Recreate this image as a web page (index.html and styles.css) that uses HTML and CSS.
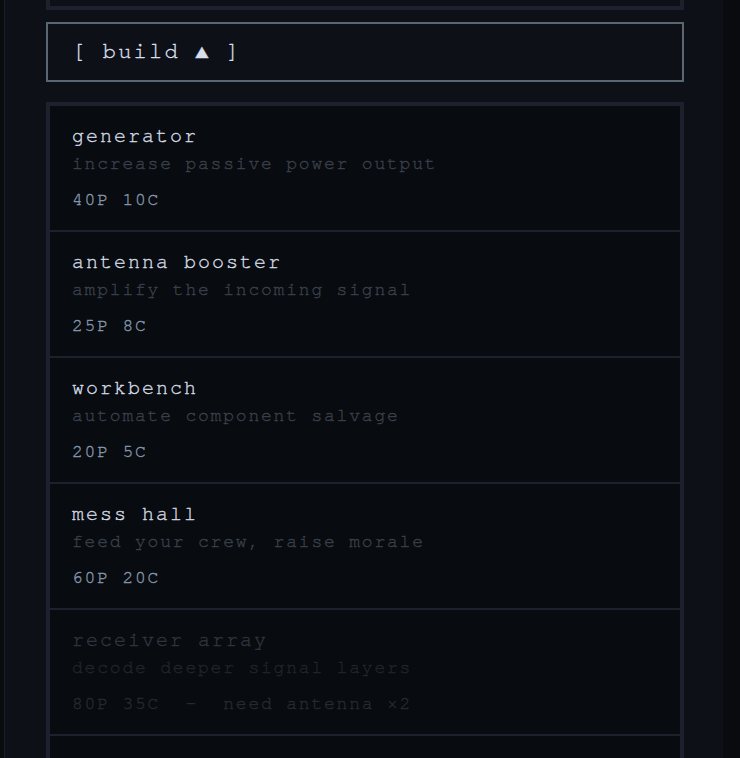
FILE: index.html
```html
<!DOCTYPE html>
<html>

<head>
  <meta charset="UTF-8">
  <title>outpost</title>
  <meta name="viewport" content="width=device-width,initial-scale=1.0">
  <link rel="stylesheet" href="styles.css">
</head>

<body>
  <div class="panel">

    <div class="log_box"></div>

    <div class="build_toggle">[ build ▲ ]</div>

    <div class="build_list">

      <div class="build_item">
        <div class="item_name">generator</div>
        <div class="item_desc">increase passive power output</div>
        <div class="item_cost">40P 10C</div>
      </div>

      <div class="build_item">
        <div class="item_name">antenna booster</div>
        <div class="item_desc">amplify the incoming signal</div>
        <div class="item_cost">25P 8C</div>
      </div>

      <div class="build_item">
        <div class="item_name">workbench</div>
        <div class="item_desc">automate component salvage</div>
        <div class="item_cost">20P 5C</div>
      </div>

      <div class="build_item">
        <div class="item_name">mess hall</div>
        <div class="item_desc">feed your crew, raise morale</div>
        <div class="item_cost">60P 20C</div>
      </div>

      <div class="build_item locked">
        <div class="item_name">receiver array</div>
        <div class="item_desc">decode deeper signal layers</div>
        <div class="item_cost">80P 35C  —  need antenna ×2</div>
      </div>

      <div class="build_item locked"></div>

    </div>

  </div>
</body>

</html>
```

FILE: styles.css
```css
html,
body {
  margin: 0;
  padding: 0;
  height: 100%;
  overflow: hidden;
  background-color: #090b0f;
}

body {
  font-family: "TeX Gyre Cursor", FreeMono, monospace;
  -webkit-text-stroke: 0.35px;
}

.panel {
  width: 719px;
  height: 100%;
  margin-left: 4px;
  padding: 0 39px 0 41px;
  box-sizing: border-box;
  background-color: #0d1017;
  border-left: 1px solid #1a1e28;
}

.log_box {
  height: 10px;
  border: 4px solid #1c212d;
  border-top: none;
  box-sizing: border-box;
}

.build_toggle {
  margin-top: 12px;
  padding: 15px 24px 17px;
  line-height: 24px;
  border: 2px solid #5b6673;
  color: #d8dfe8;
  font-size: 22px;
  letter-spacing: 0.1em;
  white-space: pre;
  cursor: pointer;
}

.build_list {
  margin-top: 20px;
  border: 4px solid #1c212d;
  background-color: #080b10;
}

.build_item {
  height: 107px;
  padding: 17px 22px 0;
  border-bottom: 2px solid #1c212d;
}

.item_name {
  line-height: 24px;
  font-size: 20px;
  letter-spacing: 0.1em;
  color: #d6dde5;
}

.item_desc {
  margin-top: 4px;
  line-height: 24px;
  font-size: 18px;
  letter-spacing: 0.1em;
  color: #3a414b;
}

.item_cost {
  margin-top: 12px;
  line-height: 24px;
  font-size: 18px;
  letter-spacing: 0.1em;
  color: #8798ad;
  white-space: pre;
}

.locked .item_name {
  color: #323740;
}

.locked .item_desc {
  color: #20252c;
}

.locked .item_cost {
  color: #262b33;
}
```
